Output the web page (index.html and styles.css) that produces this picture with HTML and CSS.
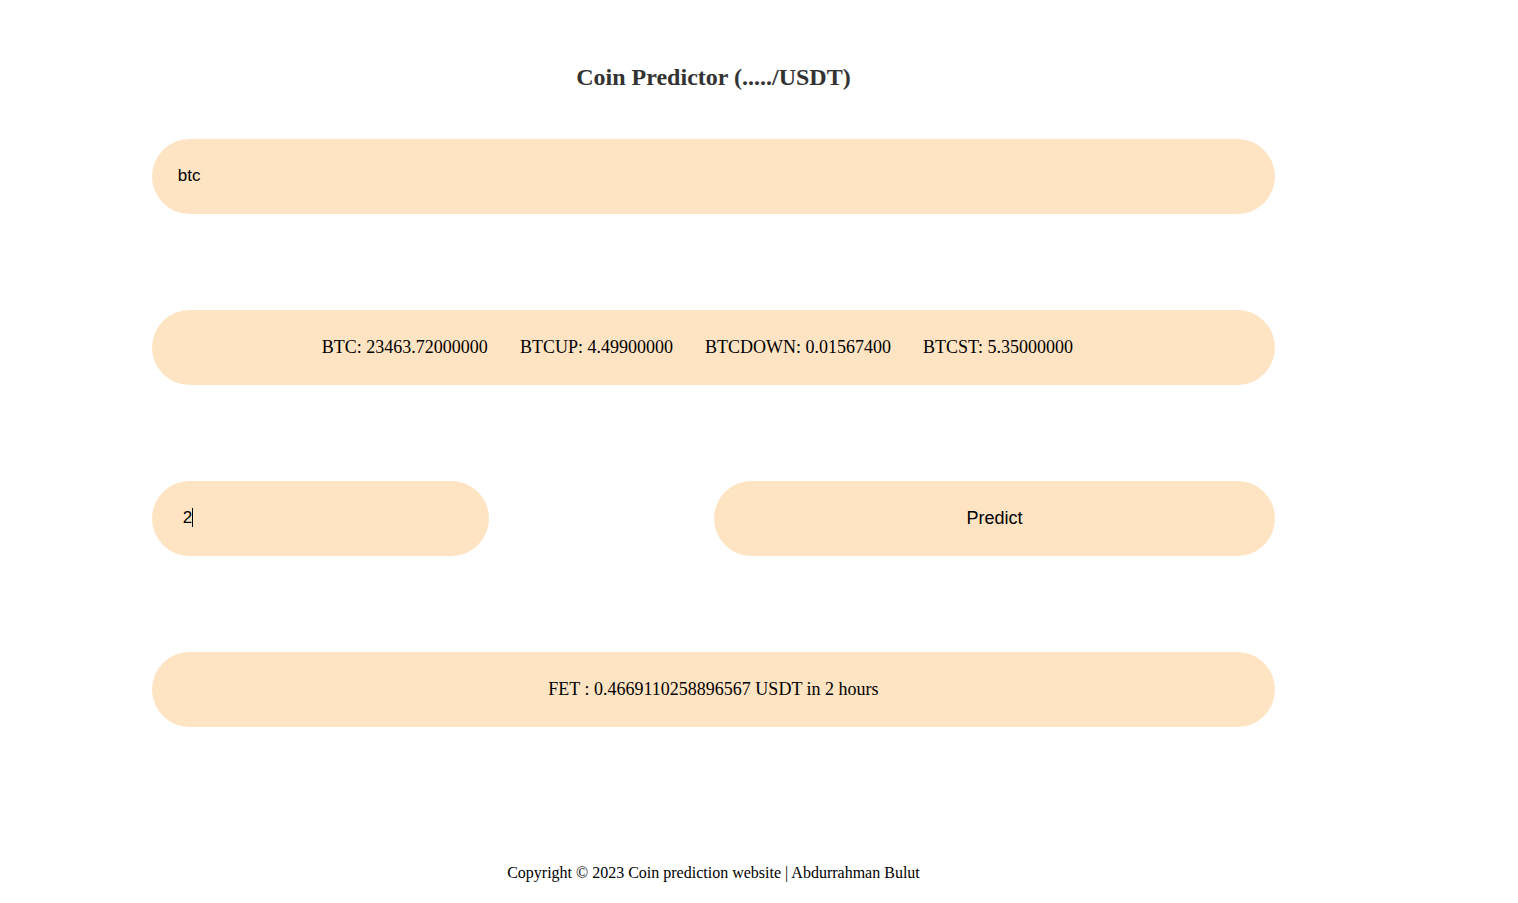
FILE: index.html
```html
<!DOCTYPE html>
<html>
<head>
<meta charset="utf-8">
<title>Coin Predictor</title>
<link rel="stylesheet" href="styles.css">
</head>
<body>
<div class="container">
  <h2 class="title">Coin Predictor (...../USDT)</h2>
  <div class="rows">
    <input class="pill field coin" type="text" value="btc">
    <div class="pill list">
      <span class="item">BTC: 23463.72000000</span>
      <span class="item">BTCUP: 4.49900000</span>
      <span class="item">BTCDOWN: 0.01567400</span>
      <span class="item">BTCST: 5.35000000</span>
    </div>
    <div class="controls">
      <div class="hours-wrap">
        <input class="pill field hours" type="number" value="2">
        <span class="caret"></span>
      </div>
      <button class="pill predict" type="button">Predict</button>
    </div>
    <div class="pill result">FET : 0.4669110258896567 USDT in 2 hours</div>
  </div>
  <footer class="footer">Copyright © 2023 Coin prediction website | Abdurrahman Bulut</footer>
</div>
</body>
</html>
```

FILE: styles.css
```css
html, body {
  margin: 0;
  padding: 0;
  background: #ffffff;
}
body {
  font-family: "Liberation Serif", "Times New Roman", serif;
  color: #000;
}
.container {
  margin-left: 10%;
  width: 74%;
  padding-top: 64px;
}
.title {
  margin: 0 0 48px 0;
  text-align: center;
  font-size: 24px;
  line-height: 27px;
  font-weight: bold;
  color: #333333;
}
.rows {
  display: flex;
  flex-direction: column;
  gap: 96px;
}
.pill {
  box-sizing: border-box;
  height: 75px;
  border: none;
  border-radius: 38px;
  background: #ffe4c4;
  outline: none;
  margin: 0;
}
.field {
  display: block;
  width: 100%;
  font-family: "Liberation Sans", Arial, sans-serif;
  font-size: 17px;
  color: #000;
  padding: 0 0 1px 26px;
}
.hours-wrap {
  position: relative;
  width: 30%;
}
.hours {
  width: 100%;
  padding-left: 31px;
  -moz-appearance: textfield;
}
.hours::-webkit-outer-spin-button,
.hours::-webkit-inner-spin-button {
  -webkit-appearance: none;
  margin: 0;
}
.caret {
  position: absolute;
  left: 40px;
  top: 27px;
  width: 1px;
  height: 19px;
  background: #000;
}
.list {
  display: flex;
  align-items: center;
  justify-content: center;
  font-size: 18px;
}
.item {
  margin-right: 32px;
  white-space: nowrap;
}
.controls {
  display: flex;
  justify-content: space-between;
}
.predict {
  width: 561px;
  font-family: "Liberation Sans", Arial, sans-serif;
  font-size: 18px;
  color: #000;
  cursor: pointer;
}
.result {
  display: flex;
  align-items: center;
  justify-content: center;
  font-size: 18px;
}
.footer {
  margin-top: 137px;
  text-align: center;
  font-size: 16px;
  line-height: 18px;
}
```
